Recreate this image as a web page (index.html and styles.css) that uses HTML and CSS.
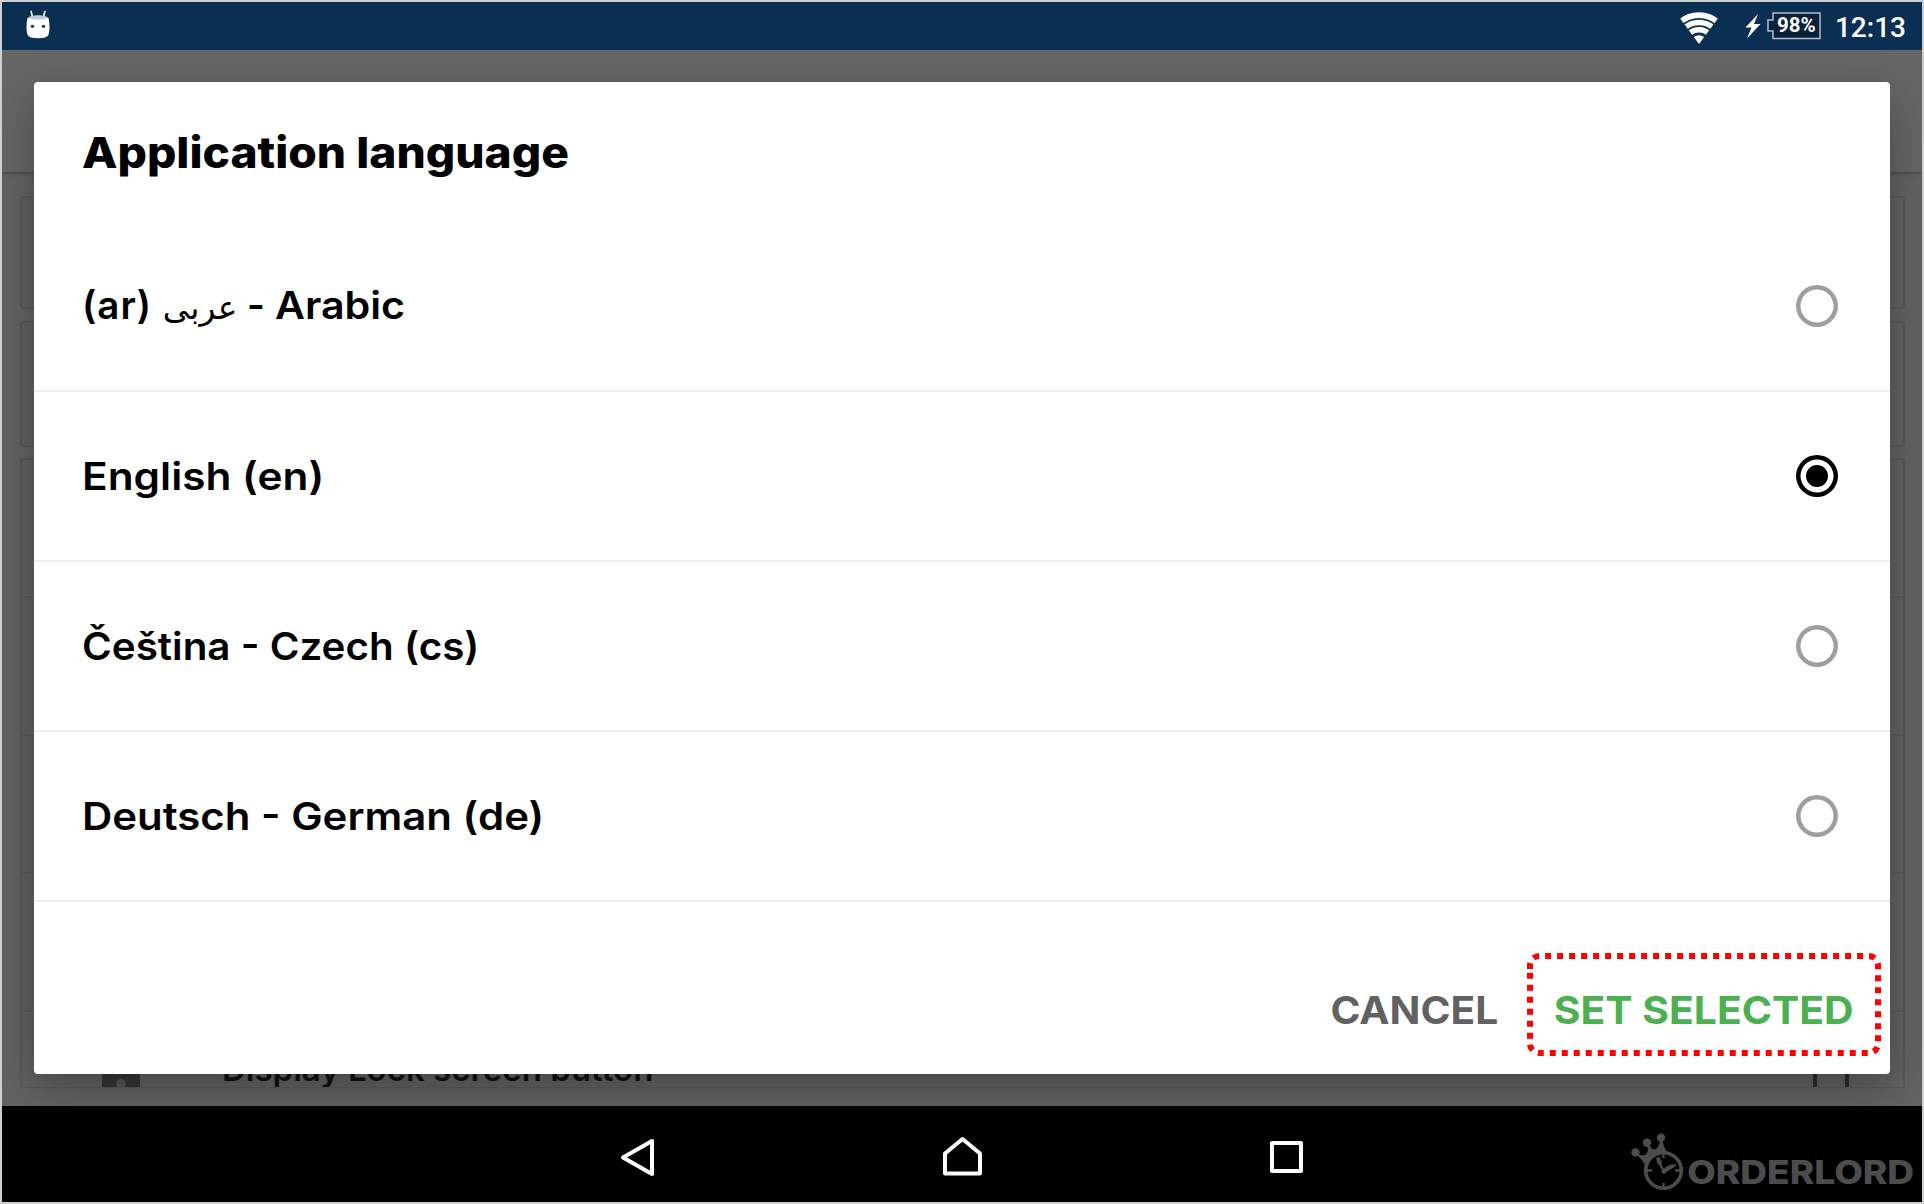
FILE: index.html
```html
<!DOCTYPE html>
<html lang="en">
<head>
<meta charset="utf-8">
<title>Application language</title>
<link rel="stylesheet" href="styles.css">
</head>
<body>
<div class="device">
  <header class="status-bar">
    <svg class="robot" width="26" height="30" viewBox="0 0 26 34" preserveAspectRatio="none">
      <path d="M6 1 L7.500 8 M20 1 L18.500 8" stroke="#fff" stroke-width="1.600" fill="none"/>
      <path d="M2.500 9 Q13 4 23.500 9 Q25.500 20 23.500 28 Q22 32 13 32 Q4 32 2.500 28 Q.5 20 2.500 9Z" fill="#fff"/>
      <ellipse cx="13" cy="8.500" rx="9.500" ry="2.600" fill="#c3cbd5"/>
      <circle cx="7.500" cy="18.500" r="1.700" fill="#0b2f53"/><circle cx="18.500" cy="18.500" r="1.700" fill="#0b2f53"/>
    </svg>
    <div class="status-right">
      <svg class="wifi" width="40" height="34" viewBox="0 0 40 34">
        <defs><clipPath id="fan"><path d="M20 33 L0 6 V0 H40 V6Z"/></clipPath></defs>
        <g clip-path="url(#fan)" fill="none" stroke="#fff" stroke-width="5.600">
          <circle cx="20" cy="33" r="28.900"/><circle cx="20" cy="33" r="21.500"/><circle cx="20" cy="33" r="14.200"/><circle cx="20" cy="33" r="4.400" stroke-width="8.800"/>
        </g>
      </svg>
      <svg class="bolt" width="16" height="26" viewBox="0 0 16 26"><path d="M13 1 L.5 14.500 H6.500 L2 25.500 L15.500 11 H9Z" fill="#fff"/></svg>
      <div class="battery">
        <svg width="54" height="28" viewBox="0 0 54 28"><path d="M6 1 H53 V26.500 H6 V19 H1 V8 H6Z" fill="#0a2139" stroke="#b4bec9" stroke-width="1.500"/></svg>
        <span class="battery-text">98%</span>
      </div>
      <span class="clock">12:13</span>
    </div>
  </header>

  <main class="screen">
    <div class="toolbar"></div>
    <div class="settings">
      <div class="card card-a"></div>
      <div class="card card-b"></div>
      <div class="card card-c">
        <div class="line"></div><div class="line"></div><div class="line"></div><div class="line"></div>
        <div class="setting">
          <svg class="lock" width="38" height="38" viewBox="0 0 38 38"><path d="M0 0H38V38H0Z" fill="#333637"/><circle cx="19" cy="34.500" r="4.700" fill="#585858"/></svg>
          <span class="setting-text">Display Lock screen button</span>
          <span class="box"></span>
        </div>
      </div>
    </div>

    <section class="dialog">
      <h1 class="title">Application language</h1>
      <div class="option"><span class="label arabic" dir="ltr"><span class="code">(ar) </span><span class="native">عربی</span> - <span class="name">Arabic</span></span><span class="radio"></span></div>
      <div class="option"><span class="label english">English (en)</span><span class="radio checked"></span></div>
      <div class="option"><span class="label czech">Čeština - Czech (cs)</span><span class="radio"></span></div>
      <div class="option"><span class="label german">Deutsch - German (de)</span><span class="radio"></span></div>
      <footer class="actions">
        <span class="cancel">CANCEL</span>
        <span class="confirm">SET SELECTED</span>
      </footer>
      <svg class="marker" width="360" height="110" viewBox="1524 950 360 110">
        <path d="M1530 969 V965.300 A9.300 9.300 0 0 1 1539.300 956 H1868.700 A9.300 9.300 0 0 1 1878 965.300 V1043.700 A9.300 9.300 0 0 1 1868.700 1053 H1539.300 A9.300 9.300 0 0 1 1530 1043.700 V971" fill="none" stroke="#f00" stroke-width="6" stroke-dasharray="6 6"/>
      </svg>
    </section>
  </main>

  <nav class="nav-bar">
    <svg class="keys" width="660" height="42" viewBox="620 1136 660 42" fill="none" stroke="#fff" stroke-width="4" stroke-linejoin="round">
      <path d="M623 1157.500 L652 1141 V1174Z"/>
      <path d="M945 1153.500 L962.500 1139 L980 1153.500 V1173.500 H945Z"/>
      <path d="M1272 1143 H1301 V1171 H1272Z"/>
    </svg>
    <div class="brand">
      <svg width="56" height="60" viewBox="0 0 56 60">
        <circle cx="32.500" cy="37.500" r="17.800" fill="none" stroke="#4c4c4c" stroke-width="3.600"/>
        <g fill="#4c4c4c"><circle cx="4.500" cy="19.500" r="4.200"/><circle cx="16" cy="9.700" r="4.200"/><circle cx="30" cy="4.800" r="4.200"/>
        <path d="M4.500 19.500 Q11 24 15.500 21 Q18.500 18 15 9.700 L17.500 9.700 Q20 16.500 24 16.500 Q29 14 29.300 5 H31 Q32 13 36.500 20 Q21 20 14.500 33 Q11 26 4.500 21Z"/>
        <path d="M25 25.500 L28 23.500 L31 29 L30.300 31 L33.500 37 L31.500 38 L28.300 32 L26.500 31Z"/>
        <path d="M32 37 Q37 30.500 46 31.500 Q42 35.500 34 39.500 Z"/><circle cx="32.700" cy="38.500" r="2.300"/></g>
        <path d="M32.500 21v4M32.500 50v5M16 37.500h5M44 37.500h5" stroke="#4c4c4c" stroke-width="2.300"/>
      </svg>
      <span class="brand-name">ORDERLORD</span>
    </div>
  </nav>
</div>
</body>
</html>
```
FILE: styles.css
```css
* { box-sizing: border-box; }
body { margin: 0; background: #ccc; font-family: Inter, "Noto Sans", sans-serif; }
.device { width: 1924px; height: 1204px; border: 2px solid #cfcfcf; display: flex; flex-direction: column; overflow: hidden; background: #000; }
.status-bar { height: 48px; background: #0b2f53; display: flex; justify-content: space-between; align-items: flex-start; padding: 8px 16px 0 23px; flex: none; }
.status-right { display: flex; align-items: flex-start; }
.wifi { margin-top: 1px; }
.bolt { margin: 3px 0 0 26px; }
.battery { position: relative; width: 54px; height: 28px; margin: 2px 0 0 6px; }
.battery-text { position: absolute; left: 10px; top: 2px; font: 700 20.500px/22px Roboto, sans-serif; color: #fff; }
.clock { margin: 4px 0 0 14px; font: 500 28px/28px Roboto, sans-serif; color: #fff; white-space: nowrap; }

.screen { height: 1056px; flex: none; display: flex; flex-direction: column; position: relative; overflow: hidden; background: #636363; }
.toolbar { height: 122px; flex: none; background: #666; box-shadow: 0 1px 4px rgba(0,0,0,.35); }
.settings { padding: 24px 17px 0 18px; height: 916px; overflow: hidden; }
.card { border: 2px solid #5a5a5a; border-radius: 4px; background: #626262; }
.card-a { height: 113px; }
.card-b { height: 126px; margin-top: 12px; }
.card-c { height: 631px; margin-top: 11px; border-radius: 4px 4px 0 0; overflow: hidden; }
.line { height: 138px; border-bottom: 2px solid #5b5b5b; }
.setting { display: flex; height: 76px; padding: 37px 54px 0 80px; align-items: flex-start; }
.setting-text { margin-left: 82px; flex: 1; font-size: 33px; line-height: 40px; font-weight: 600; color: #111; white-space: nowrap; }
.box { width: 36px; height: 60px; border: 4px solid #2b2b2b; }

.dialog { position: absolute; left: 32px; top: 32px; width: 1856px; height: 992px; background: #fff; border-radius: 4px; box-shadow: 0 14px 46px rgba(0,0,0,.3); color: #000; }
/* Headings and labels are set slightly extended. */
.title, .label { transform-origin: 0 50%; }
.title { margin: 0 0 0 48px; height: 140px; padding-top: 44px; font-size: 43px; line-height: 52px; font-weight: 800; transform: scaleX(1.073); width: 500px; white-space: nowrap; }
.option { height: 170px; border-bottom: 2px solid #eee; padding: 0 52px 0 48px; display: flex; align-items: center; justify-content: space-between; }
.label { font-size: 38.500px; line-height: 48px; font-weight: 600; white-space: nowrap; }
.code { letter-spacing: 1px; }
.name { display: inline-block; transform: scaleX(1.07); transform-origin: 0 50%; }
.english { transform: scaleX(1.1); }
.czech { transform: scaleX(1.049); }
.german { transform: scaleX(1.09); }
.native { font-family: "DejaVu Sans", sans-serif; font-weight: 400; font-size: 33px; }
.radio { width: 42px; height: 42px; box-shadow: inset 0 0 0 4.500px #9e9e9e; border-radius: 50%; display: grid; place-items: center; }
.checked { box-shadow: inset 0 0 0 4.500px #000; }
.checked::after { content: ""; width: 22px; height: 22px; border-radius: 50%; background: #000; }
.actions { display: flex; justify-content: flex-end; padding: 84px 36px 0 0; font-size: 38.500px; line-height: 48px; font-weight: 700; white-space: nowrap; }
.cancel, .confirm, .brand-name { transform-origin: 100% 50%; }
.cancel { color: #616161; margin-right: 73px; transform: scaleX(1.054); }
.confirm { color: #4caf50; transform: scaleX(1.061); }
.marker { position: absolute; left: 1490px; top: 868px; }

.nav-bar { height: 96px; flex: none; display: flex; justify-content: space-between; background: #000; }
.keys { margin: 30px 0 0 618px; overflow: visible; }
.brand { display: flex; padding: 27px 8px 0 0; align-items: flex-start; }
.brand-name { margin: 18px 0 0 25px; color: #4c4c4c; font-size: 33px; line-height: 42px; font-weight: 800; transform: scaleX(1.123); white-space: nowrap; }
```
